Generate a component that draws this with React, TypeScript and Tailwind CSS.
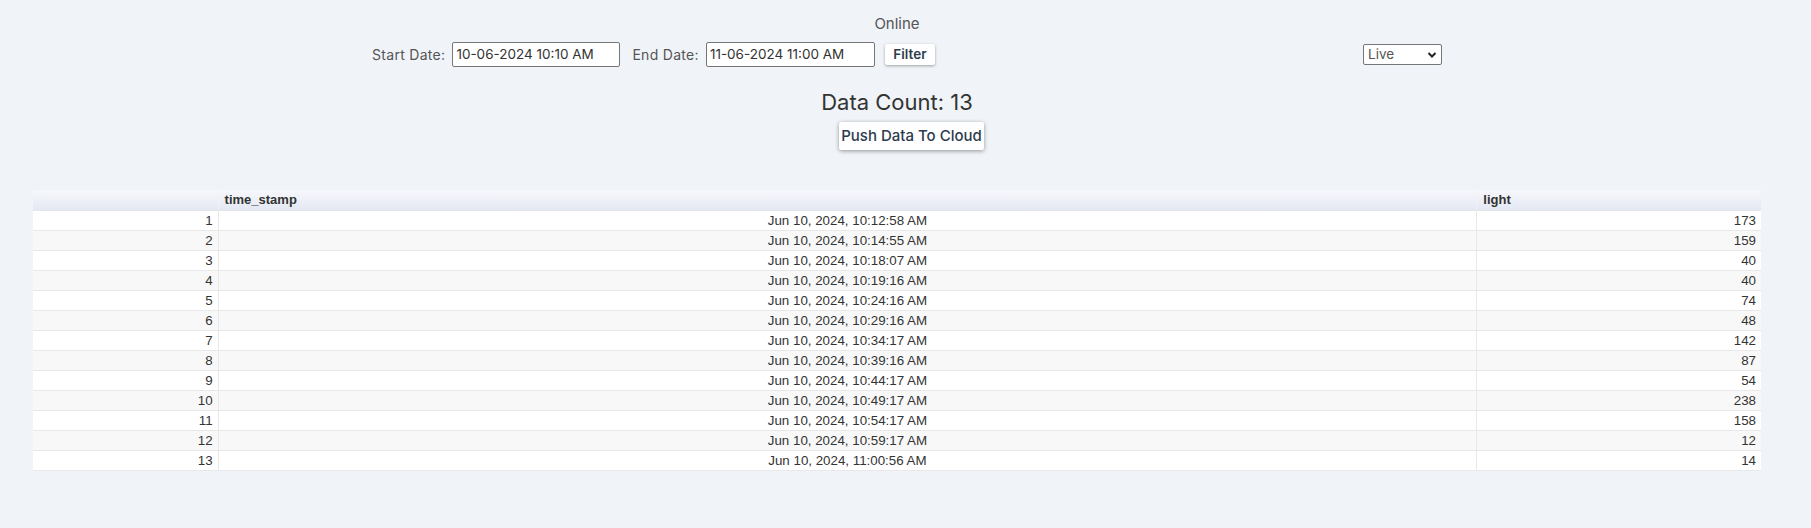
import React from "react";

const rows: [string, number][] = [
  ["Jun 10, 2024, 10:12:58 AM", 173],
  ["Jun 10, 2024, 10:14:55 AM", 159],
  ["Jun 10, 2024, 10:18:07 AM", 40],
  ["Jun 10, 2024, 10:19:16 AM", 40],
  ["Jun 10, 2024, 10:24:16 AM", 74],
  ["Jun 10, 2024, 10:29:16 AM", 48],
  ["Jun 10, 2024, 10:34:17 AM", 142],
  ["Jun 10, 2024, 10:39:16 AM", 87],
  ["Jun 10, 2024, 10:44:17 AM", 54],
  ["Jun 10, 2024, 10:49:17 AM", 238],
  ["Jun 10, 2024, 10:54:17 AM", 158],
  ["Jun 10, 2024, 10:59:17 AM", 12],
  ["Jun 10, 2024, 11:00:56 AM", 14],
];

export default function App() {
  return (
    <div className="min-h-screen bg-[#f0f4f8] font-['Inter',sans-serif]">
      <div className="w-[1794px]">
        <div className="pt-[15px] text-center text-[15px] leading-[18px] text-[#555]">
          Online
        </div>
        <div className="mt-[9px] flex h-[25px] items-center pl-[372px] text-[14px] tracking-[0.3px] text-[#555]">
          <span>Start Date:</span>
          <div className="ml-[7px] flex h-[25px] w-[168px] items-center rounded-[2px] border border-[#767676] bg-white pl-[3px] text-[13.5px] tracking-normal text-[#333]">
            10-06-2024 10:10 AM
          </div>
          <span className="ml-[12px]">End Date:</span>
          <div className="ml-[7px] flex h-[25px] w-[169px] items-center rounded-[2px] border border-[#767676] bg-white pl-[3px] text-[13.5px] tracking-normal text-[#333]">
            11-06-2024 11:00 AM
          </div>
          <button className="ml-[10px] h-[21px] w-[50px] rounded-[2px] bg-white text-[13.5px] font-semibold tracking-normal text-[#2d3b4e] shadow-[0_1px_3px_rgba(0,0,0,0.35)]">
            Filter
          </button>
        </div>
        <div className="mt-[-23px] flex h-[21px] pl-[1363px]">
          <div className="flex h-[21px] w-[79px] items-center justify-between rounded-[2px] border border-[#767676] bg-white pl-[4px] pr-[4px] text-[13.5px] text-[#555]">
            <span>Live</span>
            <svg width="10" height="8" viewBox="0 0 10 8">
              <path d="M1.5 2 L5 5.5 L8.5 2" fill="none" stroke="#222" strokeWidth="2" />
            </svg>
          </div>
        </div>
        <div className="mt-[24px] text-center text-[22px] leading-[26px] text-[#333]">
          Data Count: 13
        </div>
        <div className="mt-[7px] flex justify-center">
          <button className="ml-[29px] h-[28px] w-[145px] rounded-[2px] bg-white text-[15px] font-medium text-[#2d3b4e] shadow-[0_1px_4px_rgba(0,0,0,0.4)]">
            Push Data To Cloud
          </button>
        </div>
        <div className="mt-[40px] px-[33px]">
          <table className="w-full table-fixed border-collapse font-['Liberation_Sans',Arial,sans-serif] text-[13.33px] text-[#333]">
            <colgroup>
              <col className="w-[185px]" />
              <col className="w-[1258px]" />
              <col className="w-[284px]" />
            </colgroup>
            <thead>
              <tr className="h-[20px] bg-gradient-to-b from-[#f7f8fc] to-[#e4e8f3]">
                <th className="border-b border-[#e6e6e6] p-0"></th>
                <th className="border-b border-l border-[#e6e6e6] border-l-[#f2f2f6] pl-[6px] text-left text-[13px] font-bold">time_stamp</th>
                <th className="border-b border-l border-[#e6e6e6] border-l-[#f2f2f6] pl-[6px] text-left text-[13px] font-bold">light</th>
              </tr>
            </thead>
            <tbody>
              {rows.map(([ts, v], i) => (
                <tr key={i} className={`h-[20px] ${i % 2 === 1 ? "bg-[#f8f8f8]" : "bg-white"}`}>
                  <td className="border-b border-[#e8e8e8] py-0 pr-[5px] text-right leading-[19px]">{i + 1}</td>
                  <td className="border-b border-l border-[#e8e8e8] py-0 text-center leading-[19px]">{ts}</td>
                  <td className="border-b border-l border-[#e8e8e8] py-0 pr-[5px] text-right leading-[19px]">{v}</td>
                </tr>
              ))}
            </tbody>
          </table>
        </div>
      </div>
    </div>
  );
}
